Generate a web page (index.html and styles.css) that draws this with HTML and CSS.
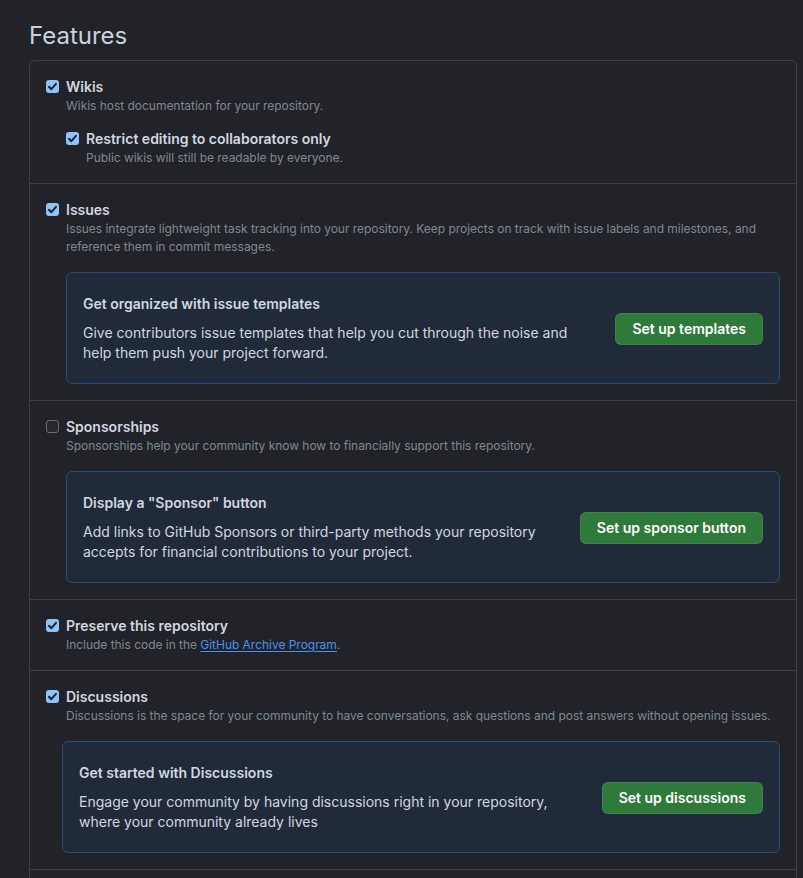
FILE: index.html
```html
<!DOCTYPE html>
<html lang="en">
<head>
<meta charset="utf-8">
<title>Features</title>
<link rel="stylesheet" href="styles.css">
</head>
<body>
<main class="page">
  <h2 class="title">Features</h2>
  <div class="box">
    <section class="row">
      <div class="opt">
        <span class="cb on"><svg viewBox="0 0 13 13" width="13" height="13"><path d="M3 6.8l2.3 2.4L10 3.9" fill="none" stroke="#1c2128" stroke-width="2" stroke-linecap="round" stroke-linejoin="round"/></svg></span>
        <div class="opt-text">
          <div class="label">Wikis</div>
          <p class="desc">Wikis host documentation for your repository.</p>
          <div class="opt nested">
            <span class="cb on"><svg viewBox="0 0 13 13" width="13" height="13"><path d="M3 6.8l2.3 2.4L10 3.9" fill="none" stroke="#1c2128" stroke-width="2" stroke-linecap="round" stroke-linejoin="round"/></svg></span>
            <div class="opt-text">
              <div class="label">Restrict editing to collaborators only</div>
              <p class="desc">Public wikis will still be readable by everyone.</p>
            </div>
          </div>
        </div>
      </div>
    </section>

    <section class="row">
      <div class="opt">
        <span class="cb on"><svg viewBox="0 0 13 13" width="13" height="13"><path d="M3 6.8l2.3 2.4L10 3.9" fill="none" stroke="#1c2128" stroke-width="2" stroke-linecap="round" stroke-linejoin="round"/></svg></span>
        <div class="opt-text">
          <div class="label">Issues</div>
          <p class="desc">Issues integrate lightweight task tracking into your repository. Keep projects on track with issue labels and milestones, and reference them in commit messages.</p>
        </div>
      </div>
      <div class="callout">
        <div class="callout-text">
          <h3 class="callout-title">Get organized with issue templates</h3>
          <p class="callout-body">Give contributors issue templates that help you cut through the noise and help them push your project forward.</p>
        </div>
        <button class="btn">Set up templates</button>
      </div>
    </section>

    <section class="row">
      <div class="opt">
        <span class="cb"></span>
        <div class="opt-text">
          <div class="label">Sponsorships</div>
          <p class="desc">Sponsorships help your community know how to financially support this repository.</p>
        </div>
      </div>
      <div class="callout">
        <div class="callout-text">
          <h3 class="callout-title">Display a "Sponsor" button</h3>
          <p class="callout-body">Add links to GitHub Sponsors or third-party methods your repository accepts for financial contributions to your project.</p>
        </div>
        <button class="btn">Set up sponsor button</button>
      </div>
    </section>

    <section class="row">
      <div class="opt">
        <span class="cb on"><svg viewBox="0 0 13 13" width="13" height="13"><path d="M3 6.8l2.3 2.4L10 3.9" fill="none" stroke="#1c2128" stroke-width="2" stroke-linecap="round" stroke-linejoin="round"/></svg></span>
        <div class="opt-text">
          <div class="label">Preserve this repository</div>
          <p class="desc">Include this code in the <a class="link" href="#">GitHub Archive Program</a>.</p>
        </div>
      </div>
    </section>

    <section class="row">
      <div class="opt">
        <span class="cb on"><svg viewBox="0 0 13 13" width="13" height="13"><path d="M3 6.8l2.3 2.4L10 3.9" fill="none" stroke="#1c2128" stroke-width="2" stroke-linecap="round" stroke-linejoin="round"/></svg></span>
        <div class="opt-text">
          <div class="label">Discussions</div>
          <p class="desc">Discussions is the space for your community to have conversations, ask questions and post answers without opening issues.</p>
        </div>
      </div>
      <div class="callout wide">
        <div class="callout-text">
          <h3 class="callout-title">Get started with Discussions</h3>
          <p class="callout-body">Engage your community by having discussions right in your repository, where your community already lives</p>
        </div>
        <button class="btn">Set up discussions</button>
      </div>
    </section>

    <section class="row row-more"></section>
  </div>
</main>
</body>
</html>
```

FILE: styles.css
```css
* { box-sizing: border-box; }

html, body {
  margin: 0;
  padding: 0;
  background: #212328;
}

body {
  font-family: Inter, "Noto Sans", "Liberation Sans", sans-serif;
  color: #d1d7e0;
  font-size: 14px;
  line-height: 20px;
}

.page {
  padding: 0 6px 40px 29px;
}

.title {
  margin: 21px 0 9px;
  font-size: 24px;
  line-height: 30px;
  font-weight: 400;
  color: #c9d2dc;
}

.box {
  border: 1px solid #3b4048;
  border-radius: 6px;
  width: 768px;
}

.row {
  padding: 16px;
}

.row + .row {
  border-top: 1px solid #3b4048;
}

.row-more {
  min-height: 48px;
}

.opt {
  display: flex;
  align-items: flex-start;
}

.cb {
  flex: none;
  width: 13px;
  height: 13px;
  margin: 3px 7px 0 0;
  border-radius: 3px;
  border: 1px solid #6a7079;
  background: #25282d;
  display: flex;
  align-items: center;
  justify-content: center;
}

.cb.on {
  border: none;
  background: #8ec2fa;
}

.cb svg { display: block; }

.opt-text { flex: 1; min-width: 0; }

.label {
  font-weight: 600;
  font-size: 14px;
  line-height: 20px;
  color: #d1d7e0;
}

.desc {
  margin: 0;
  font-size: 12px;
  line-height: 18px;
  color: #7f8892;
  letter-spacing: -0.03px;
}

.nested {
  margin-top: 14px;
}

.link {
  color: #4a92ee;
  text-decoration: underline;
  text-underline-offset: 2px;
}

.callout {
  margin: 16px 0 0 20px;
  border: 1px solid #284b7a;
  border-radius: 6px;
  background: #212a39;
  padding: 21px 16px 20px;
  display: flex;
  align-items: center;
  gap: 24px;
}

.callout.wide {
  margin-left: 16px;
}

.callout-text { flex: 1; min-width: 0; }

.callout-title {
  margin: 0 0 9px;
  font-size: 14px;
  line-height: 20px;
  font-weight: 600;
  color: #d1d7e0;
}

.callout-body {
  margin: 0;
  font-size: 14px;
  line-height: 20px;
  color: #d1d7e0;
  max-width: 500px;
}

.btn {
  flex: none;
  height: 32px;
  padding: 0 16px;
  border-radius: 6px;
  border: 1px solid rgba(240, 246, 252, 0.08);
  background: #2f7a3b;
  color: #ffffff;
  font-family: inherit;
  font-size: 14px;
  font-weight: 600;
  line-height: 20px;
}
```
